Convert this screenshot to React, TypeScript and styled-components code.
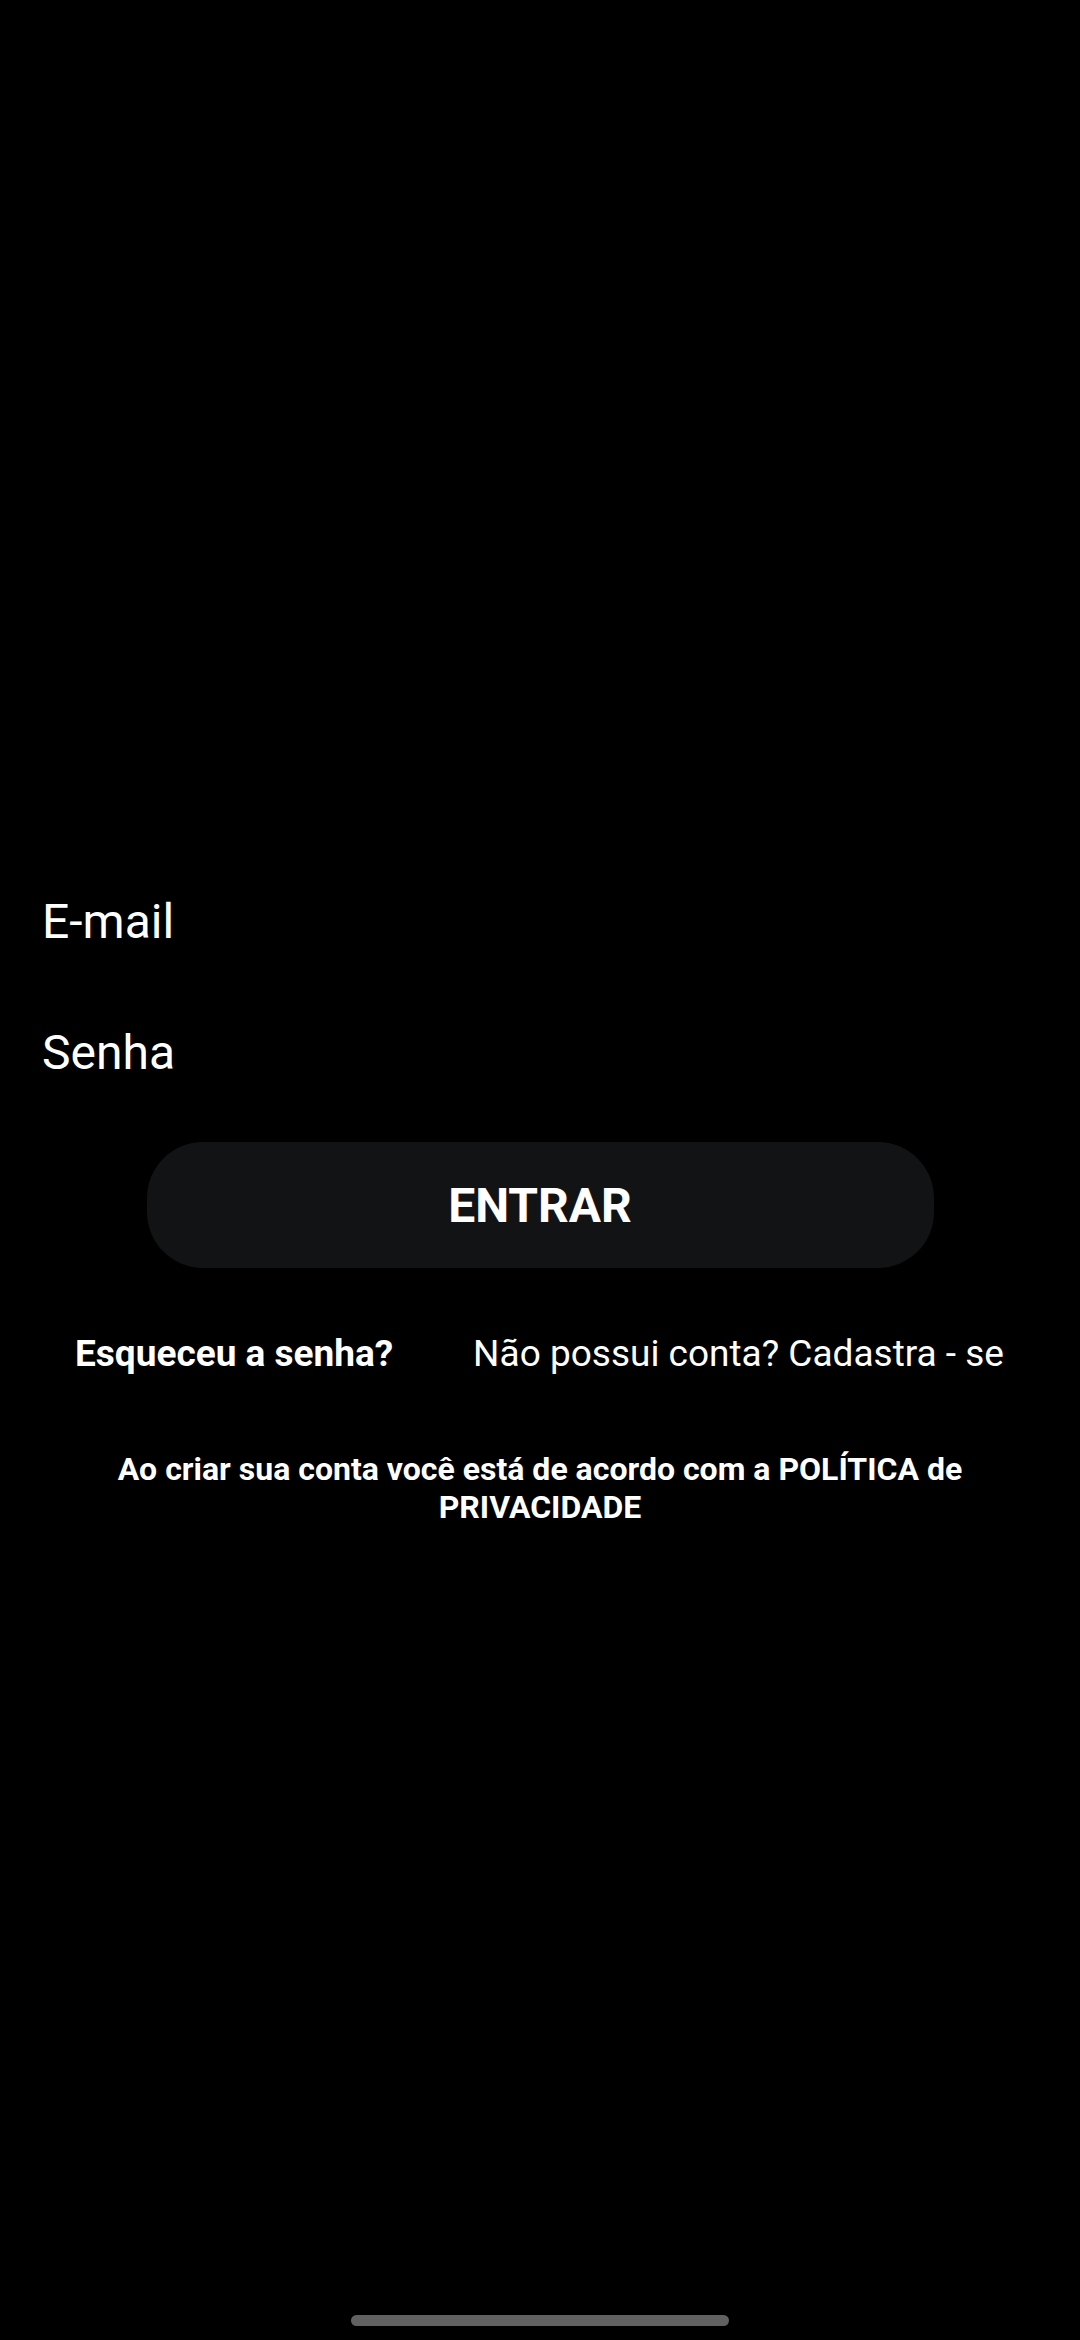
import styled, { createGlobalStyle } from "styled-components";

const GlobalStyle = createGlobalStyle`
  html, body {
    margin: 0;
    padding: 0;
    background: #000000;
  }
  * {
    box-sizing: border-box;
  }
`;

const Page = styled.div`
  min-height: 2340px;
  background: #000000;
  display: flex;
  flex-direction: column;
  font-family: Roboto, "Liberation Sans", sans-serif;
  color: #ffffff;
  padding-top: 856px;
`;

const Field = styled.input`
  display: block;
  width: 100%;
  height: 131px;
  padding: 0 42px;
  border: none;
  outline: none;
  background: transparent;
  color: #ffffff;
  font-family: Roboto, "Liberation Sans", sans-serif;
  font-size: 48px;
  &::placeholder {
    color: #ffffff;
    opacity: 1;
  }
`;

const Button = styled.button`
  align-self: center;
  width: 787px;
  height: 126px;
  margin-top: 24px;
  border: none;
  border-radius: 56px;
  background: #121315;
  color: #ffffff;
  font-family: Roboto, "Liberation Sans", sans-serif;
  font-size: 48px;
  font-weight: 700;
  cursor: pointer;
`;

const LinkRow = styled.div`
  display: flex;
  justify-content: space-between;
  margin-top: 66px;
  padding: 0 76px 0 75px;
  line-height: 40px;
  font-size: 37px;
`;

const Link = styled.span<{ $bold?: boolean }>`
  font-weight: ${(props) => (props.$bold ? 700 : 400)};
  white-space: nowrap;
`;

const Policy = styled.p`
  margin: 76px 0 0;
  padding: 0 60px;
  text-align: center;
  font-size: 32px;
  line-height: 38px;
  font-weight: 700;
`;

const HomeBar = styled.div`
  align-self: center;
  margin-top: auto;
  margin-bottom: 14px;
  width: 378px;
  height: 11px;
  border-radius: 6px;
  background: #616161;
`;

export default function App() {
  return (
    <>
      <GlobalStyle />
      <Page>
        <Field type="email" placeholder="E-mail" />
        <Field type="password" placeholder="Senha" />
        <Button type="button">ENTRAR</Button>
        <LinkRow>
          <Link $bold>Esqueceu a senha?</Link>
          <Link>Não possui conta? Cadastra - se</Link>
        </LinkRow>
        <Policy>
          Ao criar sua conta você está de acordo com a POLÍTICA de PRIVACIDADE
        </Policy>
        <HomeBar />
      </Page>
    </>
  );
}
